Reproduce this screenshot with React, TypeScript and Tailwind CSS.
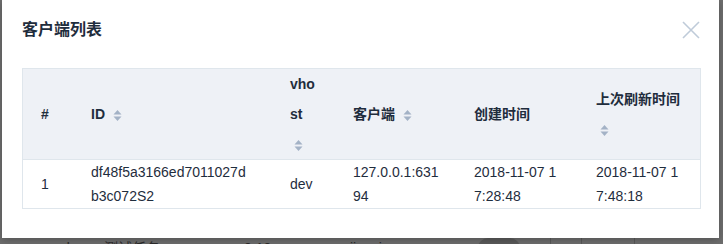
import React from 'react'

const font = { fontFamily: '"Liberation Sans", "Noto Sans CJK SC", sans-serif' }

function SortIcon() {
  return (
    <svg width="9" height="13" viewBox="0 0 9 13" className="inline-block align-middle">
      <polygon points="0.5,5.5 4.5,1 8.5,5.5" fill="#a3b2c6" />
      <polygon points="0.5,7.5 4.5,12 8.5,7.5" fill="#a3b2c6" />
    </svg>
  )
}

const rows = [
  {
    no: '1',
    id: 'df48f5a3166ed7011027db3c072S2',
    vhost: 'dev',
    client: '127.0.0.1:63194',
    created: '2018-11-07 17:28:48',
    refreshed: '2018-11-07 17:48:18',
  },
]

export default function App() {
  return (
    <div className="relative w-[723px] h-[244px] overflow-hidden bg-[#6e6e6e]" style={font}>
      {/* page behind the overlay */}
      <div className="flex items-start pt-[238px] text-[14px] leading-[20px] text-[#2b2b2b]">
        <span className="ml-[62px] w-[40px]">dev</span>
        <span className="ml-[2px] w-[140px]">测试任务</span>
        <span className="w-[86px]">0.10</span>
        <span className="ml-[20px] w-[120px]">jianying...</span>
        <span className="ml-[8px] h-[20px] w-[42px] rounded-full bg-[#5b5b5b]" />
        <span className="ml-[30px] h-[12px] w-px bg-[#5a5a5a]" />
        <span className="ml-[30px] h-[12px] w-px bg-[#5a5a5a]" />
        <span className="ml-[52px] h-[12px] w-px bg-[#5a5a5a]" />
      </div>

      {/* modal */}
      <div className="absolute left-[2px] top-0 w-[717px] h-[238px] bg-white shadow-[0_2px_8px_rgba(0,0,0,0.25)]">
        <div className="flex items-center justify-between pt-[20px] pl-[20px] pr-[18px]">
          <h2 className="text-[16px] leading-[20px] font-semibold text-[#1f2d3d]">客户端列表</h2>
          <button className="-mt-[1px] mr-[1px]">
            <svg width="18" height="18" viewBox="0 0 18 18">
              <path d="M1 1 L17 17 M17 1 L1 17" stroke="#bfcbd9" strokeWidth="1.6" fill="none" />
            </svg>
          </button>
        </div>

        <table className="mt-[28px] ml-[20px] w-[679px] table-fixed border-separate border-spacing-0 border border-[#dfe6ec] text-[14px] text-[#1f2d3d]">
          <colgroup>
            <col className="w-[50px]" />
            <col className="w-[199px]" />
            <col className="w-[63px]" />
            <col className="w-[121px]" />
            <col className="w-[122px]" />
            <col className="w-[122px]" />
          </colgroup>
          <thead>
            <tr className="bg-[#eef1f6] text-left">
              <th className="h-[90px] border-b border-[#dfe6ec] pl-[18px] leading-[30px] font-bold align-middle">#</th>
              <th className="border-b border-[#dfe6ec] pl-[18px] pr-[21px] leading-[30px] font-bold align-middle">
                ID <span className="ml-[4px]"><SortIcon /></span>
              </th>
              <th className="border-b border-[#dfe6ec] pl-[18px] pr-[17px] leading-[30px] font-bold align-middle break-all">
                vhost <span className="ml-[4px]"><SortIcon /></span>
              </th>
              <th className="border-b border-[#dfe6ec] pl-[18px] pr-[15px] leading-[30px] font-bold align-middle">
                客户端 <span className="ml-[4px]"><SortIcon /></span>
              </th>
              <th className="border-b border-[#dfe6ec] pl-[18px] pr-[18px] leading-[30px] font-bold align-middle">创建时间</th>
              <th className="border-b border-[#dfe6ec] pl-[18px] pr-[18px] leading-[30px] font-bold align-middle">
                上次刷新时间 <span className="ml-[4px]"><SortIcon /></span>
              </th>
            </tr>
          </thead>
          <tbody>
            {rows.map((r) => (
              <tr key={r.id} className="leading-[24px] align-middle">
                <td className="pl-[18px]">{r.no}</td>
                <td className="pl-[18px] pr-[21px] break-all">{r.id}</td>
                <td className="pl-[18px] pr-[17px] break-all">{r.vhost}</td>
                <td className="pl-[18px] pr-[15px] break-all">{r.client}</td>
                <td className="pl-[18px] pr-[18px] break-all">{r.created}</td>
                <td className="pl-[18px] pr-[18px] break-all">{r.refreshed}</td>
              </tr>
            ))}
          </tbody>
        </table>
      </div>
    </div>
  )
}
